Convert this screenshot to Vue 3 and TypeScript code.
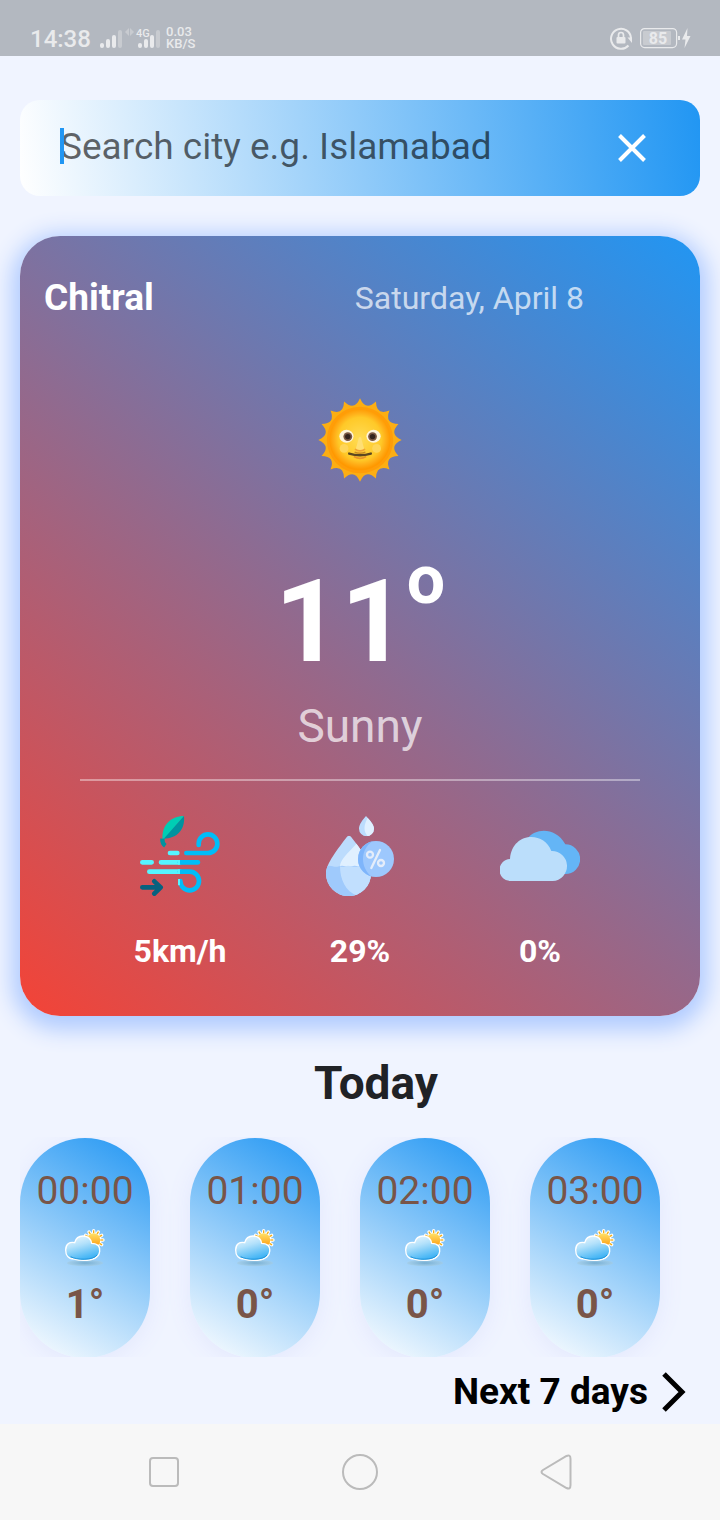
<script setup lang="ts">
import { ref } from 'vue'

interface Hour {
  time: string
  temp: number
}

const city = ref('')
const hours: Hour[] = [
  { time: '00:00', temp: 1 },
  { time: '01:00', temp: 0 },
  { time: '02:00', temp: 0 },
  { time: '03:00', temp: 0 },
]

// Sixteen-pointed outline with concave edges between the tips.
function sunOutline(cx: number, cy: number, tip: number, dip: number, count: number): string {
  const at = (r: number, step: number): string => {
    const a = (step * Math.PI) / count
    return `${(cx + r * Math.sin(a)).toFixed(1)} ${(cy - r * Math.cos(a)).toFixed(1)}`
  }
  let d = `M${at(tip, 0)}`
  for (let i = 0; i < count; i++) d += `Q${at(dip, 2 * i + 1)} ${at(tip, 2 * i + 2)}`
  return d + 'Z'
}

const sunPath = sunOutline(120, 120, 123, 86, 16)
const rayAngles = Array.from({ length: 12 }, (_, i) => i * 30)
</script>

<template>
  <div class="screen">
    <header class="status">
      <span class="clock">14:38</span>
      <svg class="signals" viewBox="0 0 62 24" aria-hidden="true">
        <g fill="#e9eaec">
          <rect x="0" y="17" width="4" height="5" rx="2" />
          <rect x="6" y="13" width="4" height="9" rx="2" />
          <rect x="12" y="9" width="4" height="13" rx="2" />
          <rect x="38" y="17" width="4" height="5" rx="2" />
          <rect x="44" y="13" width="4" height="9" rx="2" />
          <rect x="50" y="9" width="4" height="13" rx="2" />
        </g>
        <g fill="#c8cbd0">
          <rect x="18" y="4" width="4" height="18" rx="2" />
          <rect x="56" y="4" width="4" height="18" rx="2" />
          <path d="M29 2v8l-4-4zM30 2v8l4-4z" />
        </g>
        <text x="36" y="11" class="network">4G</text>
      </svg>
      <span class="speed"><b>0.03</b><b>KB/S</b></span>
      <svg class="power" viewBox="0 0 82 24" aria-hidden="true">
        <path d="M18.500 19.500A10 10 0 1 1 21 12" fill="none" stroke="#e9eaec" stroke-width="2" />
        <path d="M17.500 11.500H22V17z" fill="#e9eaec" />
        <rect x="6.500" y="11" width="9" height="6.500" rx="1" fill="#e9eaec" />
        <path d="M8.500 11V9a2.500 2.500 0 0 1 5 0v2" fill="none" stroke="#e9eaec" stroke-width="1.700" />
        <rect x="30.600" y="2.600" width="36" height="19" rx="4" fill="none" stroke="#e9eaec" stroke-width="1.200" />
        <rect x="33" y="5" width="28" height="14" rx="1" fill="#c8cbd0" />
        <rect x="68" y="10" width="2" height="4" fill="#e9eaec" />
        <path d="M77.500 2L72 13.500h3.500L74.500 22L80.500 10h-3.500z" fill="#e9eaec" />
        <text x="48" y="18" text-anchor="middle" class="charge">85</text>
      </svg>
    </header>

    <main class="content">
      <form class="search" role="search" @submit.prevent>
        <input v-model="city" class="field" type="text" placeholder="Search city e.g. Islamabad" aria-label="Search city" />
        <span class="caret"></span>
        <button class="clear" type="button" aria-label="Clear" @click="city = ''">
          <svg viewBox="0 0 28 28"><path d="M1.500 1.500L26.500 26.500M26.500 1.500L1.500 26.500" fill="none" stroke="#fff" stroke-width="4" /></svg>
        </button>
      </form>

      <section class="current">
        <div class="heading">
          <h1 class="city">Chitral</h1>
          <span class="date">Saturday, April 8</span>
        </div>

        <svg class="sun" viewBox="-4 -4 248 248" role="img" aria-label="Sun">
          <defs>
            <radialGradient id="sunFace" cx="50%" cy="48%" r="50%">
              <stop offset="0" stop-color="#ffdc55" />
              <stop offset="0.700" stop-color="#ffc928" />
              <stop offset="0.850" stop-color="#ffae18" />
              <stop offset="1" stop-color="#ff9800" />
            </radialGradient>
          </defs>
          <path :d="sunPath" fill="#fcae13" />
          <circle cx="120" cy="120" r="98" fill="#ff9d08" />
          <circle cx="120" cy="120" r="90" fill="url(#sunFace)" />
          <ellipse cx="80" cy="109" rx="21" ry="19" fill="#fff4dc" />
          <ellipse cx="160" cy="109" rx="21" ry="19" fill="#fff4dc" />
          <circle cx="84" cy="110" r="13" fill="#7b5844" />
          <circle cx="157" cy="110" r="13" fill="#7b5844" />
          <circle cx="84" cy="110" r="8" fill="#33231e" />
          <circle cx="157" cy="110" r="8" fill="#33231e" />
          <circle cx="73" cy="145" r="13" fill="#ffd65a" />
          <circle cx="169" cy="145" r="13" fill="#ffd65a" />
          <path d="M117 112L108 145Q120 154 132 145L123 112z" fill="#ffdf74" />
          <path d="M105 147Q120 157 135 147" fill="none" stroke="#f0a338" stroke-width="5" />
          <path d="M104 156Q120 162 136 156" fill="none" stroke="#c98a24" stroke-width="4" />
          <path d="M88 160Q120 170 152 160" fill="none" stroke="#5d4821" stroke-width="7" stroke-linecap="round" />
          <path d="M102 169Q120 180 138 169" fill="none" stroke="#e9952a" stroke-width="5" />
        </svg>

        <p class="temperature">11<sup class="degree">o</sup></p>
        <p class="condition">Sunny</p>
        <hr class="rule" />

        <ul class="stats">
          <li class="stat">
            <svg class="stat-icon" viewBox="0 0 240 240" role="img" aria-label="Wind">
              <path d="M132 0C92 0 62 28 68 76z" fill="#00ceb4" />
              <path d="M132 0C136 42 110 68 70 68L66 74z" fill="#00939f" />
              <path d="M67 68Q66 82 76 89" fill="none" stroke="#00939f" stroke-width="13" />
              <g fill="none" stroke-width="14">
                <path d="M90 111H112M7 139H35M63 139H120M28 167H120" stroke="#55f5ff" stroke-linecap="round" />
                <path d="M139 111H204A28 28 0 1 0 176 83V87M120 139H174M120 167H149A28 28 0 1 1 121 195" stroke="#00bdf8" stroke-linecap="round" />
                <path d="M114 139H120M114 167H120" stroke="#55f5ff" />
                <path d="M117 189V208" stroke="#55f5ff" stroke-width="6" />
                <path d="M7 214H60M43 196L62 214L43 233" stroke="#07617f" stroke-linecap="round" stroke-linejoin="round" />
              </g>
            </svg>
            <span class="stat-value">5km/h</span>
          </li>
          <li class="stat">
            <svg class="stat-icon" viewBox="0 0 240 240" role="img" aria-label="Humidity">
              <defs>
                <clipPath id="bigDrop"><path d="M81 62Q87 56 93 62C120 96 153 140 153 173A67 67 0 0 1 18 173C18 142 54 98 81 62Z" /></clipPath>
                <clipPath id="badge"><circle cx="168" cy="129" r="54" /></clipPath>
                <clipPath id="smallDrop"><path d="M138 0C148 12 162 25 162 38A22 22 0 0 1 117 38C117 25 128 12 138 0Z" /></clipPath>
              </defs>
              <g clip-path="url(#bigDrop)">
                <path d="M0 40H170V240H0z" fill="#bcdcfd" />
                <path d="M112 80C84 112 60 130 60 152H170V80z" fill="#e0f0ff" />
                <path d="M0 150Q10 154 19 151T38 151T57 151T76 151T95 151T114 151T133 151T152 151V240H0z" fill="#9fcafc" />
                <path d="M60 151Q69 154 76 151T95 151T114 151T133 151T160 151V240H112C76 226 60 190 60 151z" fill="#c1dffe" />
              </g>
              <g clip-path="url(#badge)">
                <path d="M110 70H230V190H110z" fill="#9dc8fd" />
                <path d="M110 70H168C116 92 116 166 168 190H110z" fill="#7eb5fb" />
              </g>
              <g fill="none" stroke="#e4edfa" stroke-width="7" stroke-linecap="round">
                <circle cx="150" cy="116" r="9" />
                <circle cx="183" cy="141" r="9" />
                <path d="M180 102L154 156" />
              </g>
              <g clip-path="url(#smallDrop)">
                <path d="M110 0H170V65H110z" fill="#bcdcfd" />
                <path d="M146 0C134 20 126 42 144 62H170V0z" fill="#e0f0ff" />
              </g>
            </svg>
            <span class="stat-value">29%</span>
          </li>
          <li class="stat">
            <svg class="stat-icon" viewBox="0 0 240 240" role="img" aria-label="Clouds">
              <path d="M84 66C104 38 166 30 196 85A44 44 0 0 1 196 174H84z" fill="#64b5f6" />
              <path d="M33 195A33 33 0 0 1 30 129C36 48 132 44 154 105A45 45 0 0 1 158 195z" fill="#bbdefb" />
            </svg>
            <span class="stat-value">0%</span>
          </li>
        </ul>
      </section>

      <h2 class="today">Today</h2>

      <svg class="defs" aria-hidden="true">
        <defs>
          <linearGradient id="cloudFill" x1="0" y1="0" x2="0.400" y2="1">
            <stop offset="0" stop-color="#f4fbff" />
            <stop offset="0.450" stop-color="#b3e1fb" />
            <stop offset="1" stop-color="#42b4f5" />
          </linearGradient>
          <linearGradient id="raysFill" x1="0" y1="0" x2="0" y2="1">
            <stop offset="0" stop-color="#ffe066" />
            <stop offset="1" stop-color="#ff9c12" />
          </linearGradient>
          <radialGradient id="groundFill">
            <stop offset="0" stop-color="#6ba5c8" stop-opacity="0.800" />
            <stop offset="1" stop-color="#a5cbe0" stop-opacity="0.600" />
          </radialGradient>
        </defs>
      </svg>

      <ul class="hours">
        <li v-for="hour in hours" :key="hour.time" class="hour">
          <span class="hour-time">{{ hour.time }}</span>
          <svg class="hour-icon" viewBox="0 0 120 120" role="img" aria-label="Partly cloudy">
            <ellipse cx="60" cy="105" rx="54" ry="10" fill="url(#groundFill)" />
            <g stroke="#fff" stroke-width="10" stroke-linecap="round">
              <path v-for="angle in rayAngles" :key="angle" d="M86 15V8" :transform="`rotate(${angle} 86 36)`" />
            </g>
            <circle cx="86" cy="36" r="23" fill="#fff" />
            <g stroke="#f3ad16" stroke-width="4">
              <path v-for="angle in rayAngles" :key="angle" d="M86 16V7" :transform="`rotate(${angle} 86 36)`" />
            </g>
            <circle cx="86" cy="36" r="20" fill="url(#raysFill)" />
            <path d="M27 93C9 93 2 80 2 66C2 48 15 40 29 44C36 17 74 17 80 46C99 46 106 57 104 70C102 88 89 97 55 97C42 97 34 95 27 93Z" fill="url(#cloudFill)" stroke="#fff" stroke-width="4" />
            <path d="M17 86C35 97 86 97 96 81" fill="none" stroke="#2296dc" stroke-width="3" />
          </svg>
          <span class="hour-temp">{{ hour.temp }}°</span>
        </li>
      </ul>

      <a class="next" href="#week">
        <span>Next 7 days</span>
        <svg class="chevron" viewBox="0 0 24 40" aria-hidden="true"><path d="M2 2L20 20L2 38" fill="none" stroke="#000" stroke-width="5" /></svg>
      </a>
    </main>

    <nav class="system" aria-label="System">
      <button class="key" type="button" aria-label="Recent apps">
        <svg viewBox="0 0 40 40"><rect x="6" y="6" width="28" height="28" rx="3" /></svg>
      </button>
      <button class="key" type="button" aria-label="Home">
        <svg viewBox="0 0 40 40"><circle cx="20" cy="20" r="17" /></svg>
      </button>
      <button class="key" type="button" aria-label="Back">
        <svg viewBox="0 0 40 40"><path d="M30.500 4Q34.500 2 34.500 7V33Q34.500 38 30.500 36L7 22Q4 20 7 18Z" /></svg>
      </button>
    </nav>
  </div>
</template>

<style>
body {
  margin: 0;
  background: #f0f4ff;
}
</style>

<style scoped>
.screen {
  display: flex;
  flex-direction: column;
  min-height: 100vh;
  background: #f0f4ff;
  color: #000;
  font-family: Roboto, "Liberation Sans", sans-serif;
}
h1, h2, p, ul { margin: 0; padding: 0; }
ul { list-style: none; }
button { padding: 0; border: 0; background: none; }

.status {
  box-sizing: border-box;
  display: flex;
  align-items: flex-start;
  height: 56px;
  padding: 26px 28px 0 30px;
  background: #b3b8c0;
  color: #e9eaec;
}
.clock { width: 70px; font-size: 24px; font-weight: 500; line-height: 26px; }
.signals { width: 62px; height: 24px; }
.network { font-size: 11px; font-weight: 500; fill: #e9eaec; }
.speed { display: flex; flex-direction: column; margin-left: 4px; font-size: 13px; line-height: 12px; }
.speed b { font-weight: 500; }
.power { width: 82px; height: 24px; margin-left: auto; }
.charge { font-size: 16px; font-weight: 700; fill: #e9eaec; }

.content { display: flex; flex-direction: column; padding: 44px 20px 0; }

.search {
  position: relative;
  display: flex;
  align-items: center;
  height: 96px;
  border-radius: 20px;
  background: linear-gradient(82deg, #fff, #2196f3);
}
.field {
  flex: 1;
  min-width: 0;
  height: 92px;
  margin-bottom: 4px;
  padding: 0 0 0 40px;
  border: 0;
  outline: 0;
  background: none;
  color: #222;
  font: 400 37px Roboto, "Liberation Sans", sans-serif;
}
.field::placeholder { color: rgba(0, 0, 0, 0.6); opacity: 1; }
.caret {
  position: absolute;
  top: 28px;
  left: 40px;
  width: 4px;
  height: 36px;
  background: #2196f3;
}
.clear { width: 28px; height: 28px; margin-right: 54px; }
.clear svg { display: block; width: 28px; height: 28px; }

.current {
  display: flex;
  flex-direction: column;
  margin-top: 40px;
  padding-bottom: 44px;
  border-radius: 40px;
  background: linear-gradient(41deg, #f44336, #2196f3);
  box-shadow: 0 6px 22px 8px #b0cbff;
  color: #fff;
}
.heading {
  display: flex;
  justify-content: space-between;
  align-items: center;
  padding: 40px 116px 0 24px;
}
.city { font-size: 37px; font-weight: 700; line-height: 44px; }
.date { color: rgba(255, 255, 255, 0.7); font-size: 32px; line-height: 44px; }
.sun { align-self: center; width: 84px; height: 84px; margin-top: 78px; }
.temperature {
  align-self: center;
  margin-top: 72px;
  font-size: 115px;
  font-weight: 700;
  line-height: 136px;
}
.degree { font-size: 68px; line-height: 0; vertical-align: 58px; }
.condition {
  align-self: center;
  margin-top: 8px;
  color: rgba(255, 255, 255, 0.7);
  font-size: 46px;
  line-height: 56px;
}
.rule {
  box-sizing: border-box;
  height: 2px;
  margin: 25px 60px 0;
  border: 0;
  background: rgba(255, 255, 255, 0.4);
}
.stats { display: flex; padding: 35px 70px 0; }
.stat { display: flex; flex: 1; flex-direction: column; align-items: center; }
.stat-icon { width: 80px; height: 80px; }
.stat-value { margin-top: 35px; margin-bottom: 1px; font-size: 32px; font-weight: 700; line-height: 40px; }

.today {
  align-self: center;
  margin-top: 39px;
  padding-left: 32px;
  color: #202226;
  font-size: 46px;
  font-weight: 700;
  line-height: 56px;
}
.defs { position: absolute; width: 0; height: 0; }
.hours { display: flex; gap: 40px; height: 220px; margin-top: 26px; overflow: hidden; }
.hour {
  box-sizing: border-box;
  display: flex;
  flex: none;
  flex-direction: column;
  align-items: center;
  width: 130px;
  height: 220px;
  margin-top: 1px;
  padding-top: 30px;
  border-radius: 65px;
  background: linear-gradient(31deg, #fff, #2196f3);
  box-shadow: 0 4px 24px #e2e7fd;
  color: #795548;
}
.hour-time { font-size: 39px; line-height: 46px; }
.hour-icon { width: 40px; height: 40px; margin-top: 14px; overflow: visible; }
.hour-temp { margin-top: 14px; font-size: 40px; font-weight: 700; line-height: 46px; }

.next {
  display: flex;
  align-self: flex-end;
  align-items: center;
  gap: 14px;
  margin-top: 15px;
  padding-right: 14px;
  color: #000;
  font-size: 37px;
  font-weight: 700;
  line-height: 40px;
  text-decoration: none;
}
.chevron { width: 24px; height: 40px; }

.system {
  display: flex;
  align-items: center;
  height: 96px;
  margin-top: auto;
  padding: 0 66px;
  background: #f7f7f7;
}
.key { display: flex; flex: 1; justify-content: center; }
.key svg { width: 40px; height: 40px; fill: none; stroke: #bbb; stroke-width: 2; }
</style>
